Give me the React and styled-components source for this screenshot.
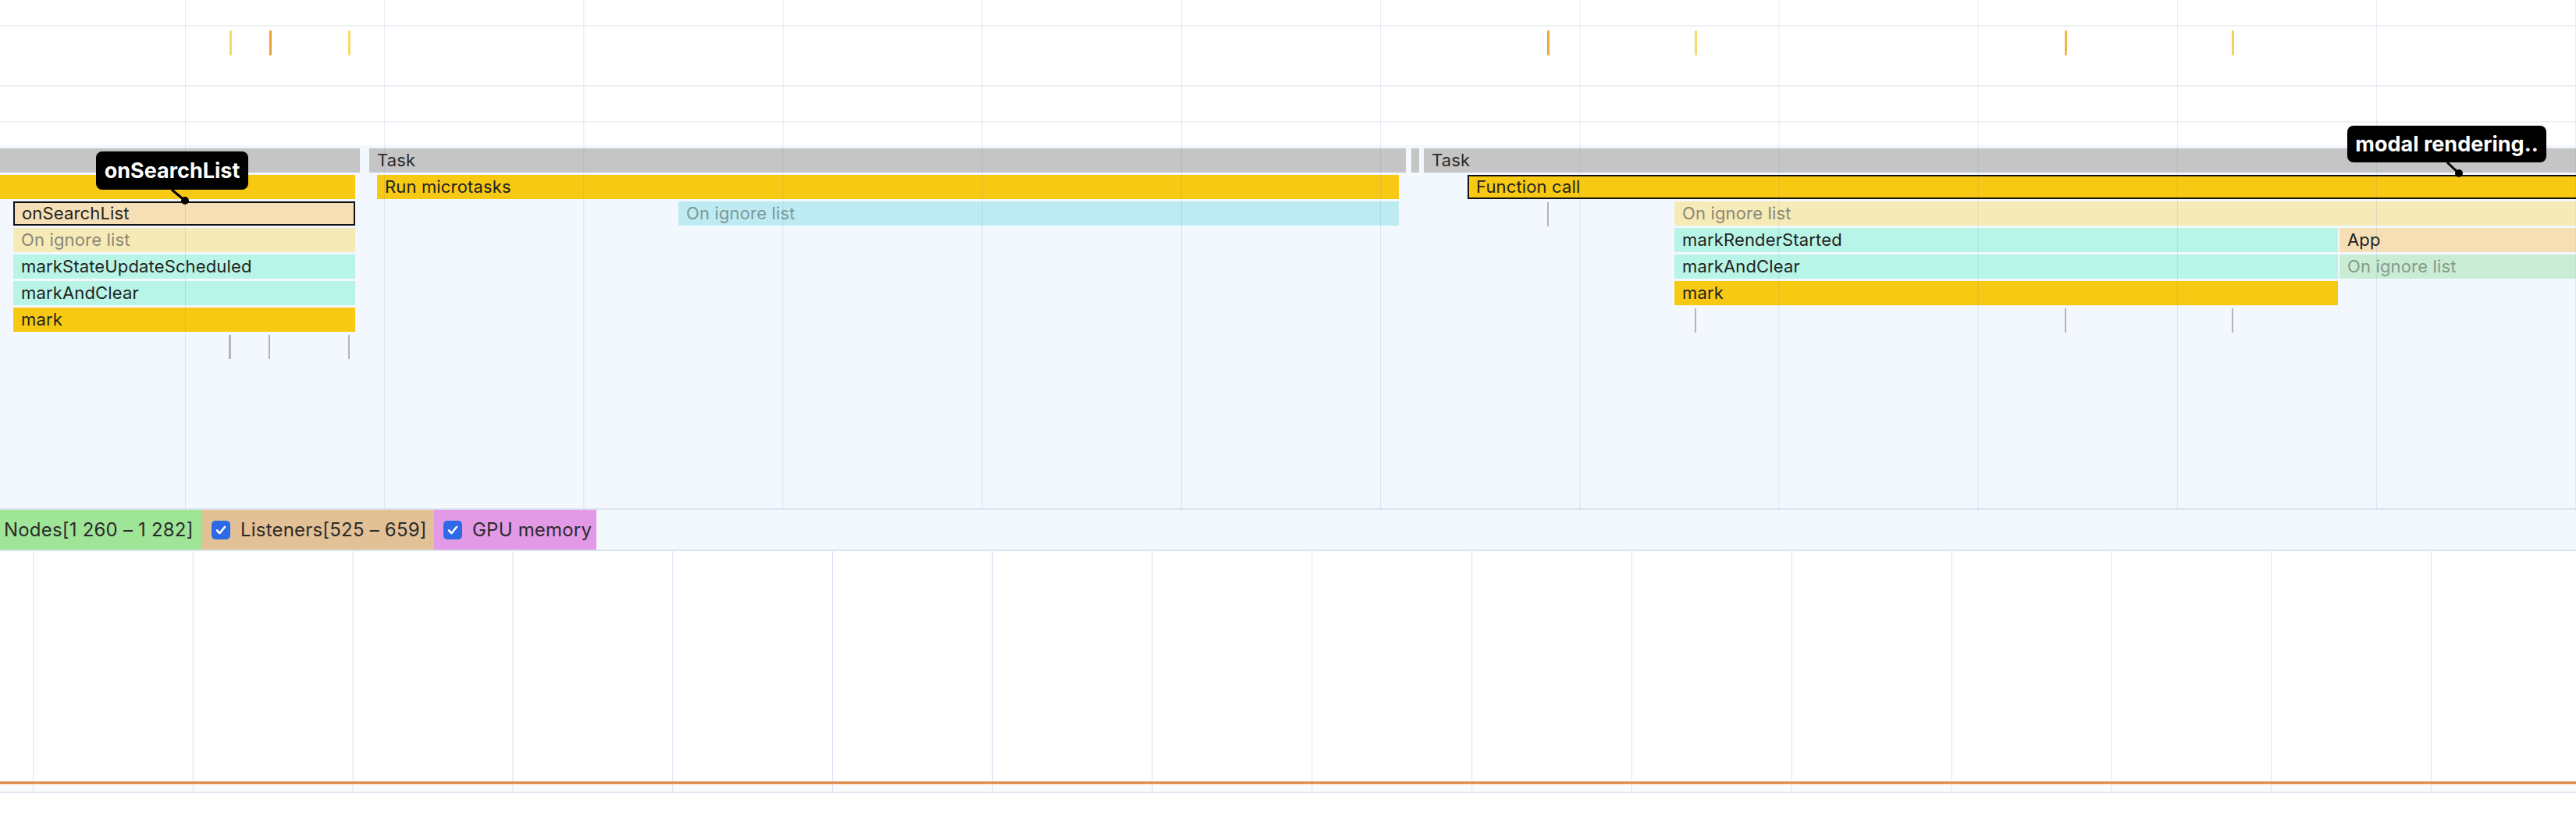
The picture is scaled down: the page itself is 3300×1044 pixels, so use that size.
import React from "react";
import styled, { createGlobalStyle } from "styled-components";

const Global = createGlobalStyle`
  html, body { margin: 0; padding: 0; background: #ffffff; }
  body { font-family: Inter, "Liberation Sans", sans-serif; }
`;

const Page = styled.div`
  width: 3300px;
  height: 1044px;
  overflow: hidden;
  background: #ffffff;
  display: flex;
  flex-direction: column;
`;

const Upper = styled.div`
  position: relative;
  height: 653px;
  display: flex;
  flex-direction: column;
  flex: none;
`;

const GridOverlay = styled.div`
  position: absolute;
  inset: 0;
  pointer-events: none;
  z-index: 2;
  background-image: linear-gradient(to right, rgba(50, 100, 200, 0.12) 0 1px, transparent 1px);
  background-size: 255.2px 100%;
  background-position: 237px 0;
`;

const Overview = styled.div`
  height: 186px;
  display: flex;
  flex-direction: column;
  background: #ffffff;
  flex: none;
`;

const Track = styled.div`
  position: relative;
  height: ${(p) => p.$h}px;
  border-bottom: ${(p) => (p.$last ? "none" : "2px solid #eeeff2")};
  flex: none;
`;

const Marker = styled.div`
  position: absolute;
  top: 5px;
  height: 32px;
  width: 3px;
  background: ${(p) => p.$c};
  border-radius: 1px;
`;

const Flame = styled.div`
  flex: 1;
  background: #f3f7fe;
  border-bottom: 2px solid #dce5f2;
  display: flex;
  flex-direction: column;
  gap: 3px;
  padding-top: 4px;
`;

const Row = styled.div`
  position: relative;
  height: 31px;
  flex: none;
`;

const palette = {
  task: { bg: "#c5c5c5", fg: "#2a2a2a" },
  script: { bg: "#f8c913", fg: "#222222" },
  peach: { bg: "#f6dfb5", fg: "#222222" },
  mint: { bg: "#b8f5e6", fg: "#222222" },
  yellowIgnore: { bg: "#f6ebb6", fg: "#8a8679" },
  cyanIgnore: { bg: "#bdebf1", fg: "#7d9799" },
  greenIgnore: { bg: "#c9edd4", fg: "#85998b" },
};

const Bar = styled.div`
  position: absolute;
  top: 0;
  height: 31px;
  box-sizing: border-box;
  background: ${(p) => palette[p.$kind].bg};
  color: ${(p) => palette[p.$kind].fg};
  border: ${(p) => (p.$selected ? "2px solid #111" : "none")};
  padding-left: ${(p) => (p.$selected ? 9 : 10)}px;
  font-size: 22px;
  letter-spacing: 0.15px;
  line-height: ${(p) => (p.$selected ? 27 : 31)}px;
  white-space: nowrap;
  overflow: hidden;
`;

const Tick = styled.div`
  position: absolute;
  top: 1px;
  height: 31px;
  width: ${(p) => p.$w}px;
  background: #b5b5b8;
`;

const Callout = styled.div`
  position: absolute;
  left: ${(p) => p.$x}px;
  top: ${(p) => p.$y}px;
  width: ${(p) => p.$w}px;
  height: ${(p) => p.$h}px;
  background: #000;
  color: #fff;
  border-radius: 8px;
  font-weight: 700;
  font-size: 27px;
  display: flex;
  align-items: center;
  justify-content: center;
  z-index: 5;
  white-space: nowrap;
`;

const Tail = styled.svg`
  position: absolute;
  left: 0;
  top: 0;
  overflow: visible;
  z-index: 5;
  pointer-events: none;
`;

const Legend = styled.div`
  height: 51px;
  flex: none;
  display: flex;
  background: #f3f7fe;
  border-bottom: 2px solid #d7e1f0;
`;

const LegendItem = styled.div`
  width: ${(p) => p.$w}px;
  box-sizing: border-box;
  background: ${(p) => p.$bg};
  display: flex;
  align-items: center;
  gap: 13px;
  padding-left: ${(p) => p.$pl}px;
  font-size: 24px;
  letter-spacing: 0.2px;
  color: #2b2b2b;
  white-space: nowrap;
  overflow: hidden;
  flex: none;
`;

const Check = styled.span`
  width: 24px;
  height: 24px;
  border-radius: 5px;
  background: #2c6ae8;
  display: flex;
  align-items: center;
  justify-content: center;
  flex: none;
`;

const Chart = styled.div`
  height: 295px;
  flex: none;
  background-color: #ffffff;
  background-image: linear-gradient(to right, #dae3f3 0 1px, transparent 1px);
  background-size: 204.8px 100%;
  background-position: 42px 0;
  border-bottom: 3px solid #de8b4c;
`;

const ChartFoot = styled.div`
  height: 9px;
  flex: none;
  background-color: #fbfcfe;
  background-image: linear-gradient(to right, #dae3f3 0 1px, transparent 1px);
  background-size: 204.8px 100%;
  background-position: 42px 0;
  border-top: 1px solid #f6dcb8;
  border-bottom: 2px solid #dfe6f2;
`;

const Rest = styled.div`
  flex: 1;
  background: #ffffff;
`;

const overviewMarks = [
  { x: 294, c: "#f8d868" },
  { x: 345, c: "#e7a03c" },
  { x: 446, c: "#f8d868" },
  { x: 1982, c: "#e9ab3c" },
  { x: 2171, c: "#f8da70" },
  { x: 2645, c: "#efb84a" },
  { x: 2859, c: "#f6d260" },
];

const rows = [
  {
    bars: [
      { x: 0, w: 461, kind: "task" },
      { x: 473, w: 1328, kind: "task", label: "Task" },
      { x: 1808, w: 9, kind: "task" },
      { x: 1824, w: 1480, kind: "task", label: "Task" },
    ],
  },
  {
    bars: [
      { x: 0, w: 455, kind: "script" },
      { x: 483, w: 1309, kind: "script", label: "Run microtasks" },
      { x: 1880, w: 1424, kind: "script", label: "Function call", selected: true },
    ],
  },
  {
    bars: [
      { x: 17, w: 438, kind: "peach", label: "onSearchList", selected: true },
      { x: 869, w: 923, kind: "cyanIgnore", label: "On ignore list" },
      { x: 2145, w: 1160, kind: "yellowIgnore", label: "On ignore list" },
    ],
    ticks: [{ x: 1982, w: 2 }],
  },
  {
    bars: [
      { x: 17, w: 438, kind: "yellowIgnore", label: "On ignore list" },
      { x: 2145, w: 850, kind: "mint", label: "markRenderStarted" },
      { x: 2997, w: 308, kind: "peach", label: "App" },
    ],
  },
  {
    bars: [
      { x: 17, w: 438, kind: "mint", label: "markStateUpdateScheduled" },
      { x: 2145, w: 850, kind: "mint", label: "markAndClear" },
      { x: 2997, w: 308, kind: "greenIgnore", label: "On ignore list" },
    ],
  },
  {
    bars: [
      { x: 17, w: 438, kind: "mint", label: "markAndClear" },
      { x: 2145, w: 850, kind: "script", label: "mark" },
    ],
  },
  {
    bars: [{ x: 17, w: 438, kind: "script", label: "mark" }],
    ticks: [
      { x: 2171, w: 2 },
      { x: 2645, w: 2 },
      { x: 2859, w: 2 },
    ],
  },
  {
    bars: [],
    ticks: [
      { x: 293, w: 3 },
      { x: 344, w: 2 },
      { x: 446, w: 2 },
    ],
  },
];

const callouts = [
  { label: "onSearchList", x: 123, y: 194, w: 195, h: 49, tail: [220, 243, 237, 257] },
  { label: "modal rendering..", x: 3007, y: 161, w: 255, h: 47, tail: [3135, 208, 3150, 222] },
];

const legend = [
  { label: "Nodes[1 260 – 1 282]", bg: "#9fe598", w: 259, pl: 5, check: false },
  { label: "Listeners[525 – 659]", bg: "#e2c196", w: 297, pl: 12, check: true },
  { label: "GPU memory", bg: "#e29ae6", w: 208, pl: 12, check: true },
];

function CheckIcon() {
  return (
    <svg width="16" height="16" viewBox="0 0 16 16">
      <path d="M3 8.5 L6.5 12 L13 4" fill="none" stroke="#fff" strokeWidth="2.6" strokeLinecap="round" strokeLinejoin="round" />
    </svg>
  );
}

export default function App() {
  return (
    <Page>
      <Global />
      <Upper>
        <Overview>
          <Track $h={32} />
          <Track $h={75}>
            {overviewMarks.map((m, i) => (
              <Marker key={i} $c={m.c} style={{ left: m.x }} />
            ))}
          </Track>
          <Track $h={44} />
          <Track $h={35} $last />
        </Overview>
        <Flame>
          {rows.map((r, i) => (
            <Row key={i}>
              {r.bars.map((b, j) => (
                <Bar key={j} $kind={b.kind} $selected={b.selected} style={{ left: b.x, width: b.w }}>
                  {b.label}
                </Bar>
              ))}
              {(r.ticks || []).map((t, j) => (
                <Tick key={"t" + j} $w={t.w} style={{ left: t.x }} />
              ))}
            </Row>
          ))}
        </Flame>
        <GridOverlay />
        {callouts.map((c, i) => (
          <React.Fragment key={i}>
            <Callout $x={c.x} $y={c.y} $w={c.w} $h={c.h}>
              {c.label}
            </Callout>
            <Tail width="1" height="1">
              <line x1={c.tail[0]} y1={c.tail[1]} x2={c.tail[2]} y2={c.tail[3]} stroke="#000" strokeWidth="3" />
              <circle cx={c.tail[2]} cy={c.tail[3]} r="5" fill="#000" />
            </Tail>
          </React.Fragment>
        ))}
      </Upper>
      <Legend>
        {legend.map((l, i) => (
          <LegendItem key={i} $bg={l.bg} $w={l.w} $pl={l.pl}>
            {l.check && (
              <Check>
                <CheckIcon />
              </Check>
            )}
            <span>{l.label}</span>
          </LegendItem>
        ))}
      </Legend>
      <Chart />
      <ChartFoot />
      <Rest />
    </Page>
  );
}
